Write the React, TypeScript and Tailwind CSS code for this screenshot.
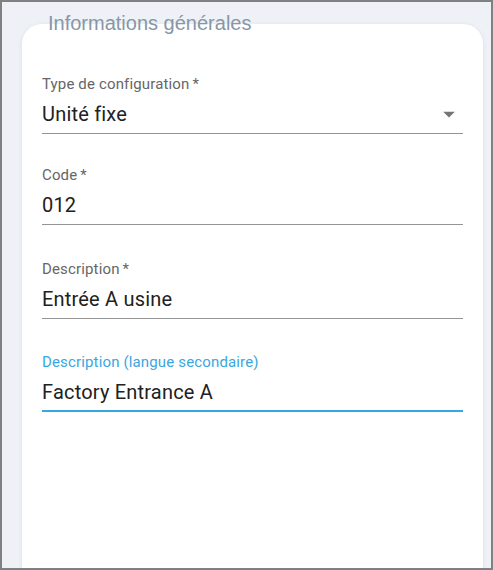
const fields = [
  { label: 'Type de configuration', required: true, value: 'Unité fixe', select: true, gap: 'mt-0' },
  { label: 'Code', required: true, value: '012', gap: 'mt-[31px]' },
  { label: 'Description', required: true, value: 'Entrée A usine', gap: 'mt-[34px]' },
  { label: 'Description (langue secondaire)', required: false, value: 'Factory Entrance A', focused: true, gap: 'mt-[33px]' },
]

function ArrowDrop() {
  return (
    <svg width="28" height="28" viewBox="0 0 24 24" className="shrink-0 fill-[#757575]">
      <path d="M7 10l5 5 5-5z" />
    </svg>
  )
}

export default function App() {
  return (
    <div className="h-[570px] w-[493px] overflow-hidden border-2 border-[#808080] bg-[#eef1f5]">
      {/* Section title sits over the card edge */}
      <div className="relative z-10 mt-[11px] pl-[46px] font-['Liberation_Sans',Arial,sans-serif] text-[20px] leading-[20px] text-[#8796a8]">
        Informations générales
      </div>

      <div className="-mt-[9px] ml-[20px] mr-[8px] h-[600px] rounded-[20px] bg-white px-[20px] pt-[50px] font-['Roboto',sans-serif] tracking-[0.15px] shadow-[0_1px_5px_rgba(0,0,0,0.08)]">
        {fields.map((f) => (
          <div key={f.label} className={f.gap}>
            <div className={`text-[15px] leading-[20px] ${f.focused ? 'text-[#39a7df]' : 'text-[#666666]'}`}>
              {f.label}
              {f.required && <span className="ml-[3px]">*</span>}
            </div>
            <div
              className={`mt-[6px] flex items-center justify-between ${
                f.focused ? 'border-b-2 border-[#39a7df] pb-[4px]' : 'border-b border-[#949494] pb-[5px]'
              }`}
            >
              <span className="text-[20px] leading-[28px] tracking-[0.19px] text-[#212121]">{f.value}</span>
              {f.select && <ArrowDrop />}
            </div>
          </div>
        ))}
      </div>
    </div>
  )
}
